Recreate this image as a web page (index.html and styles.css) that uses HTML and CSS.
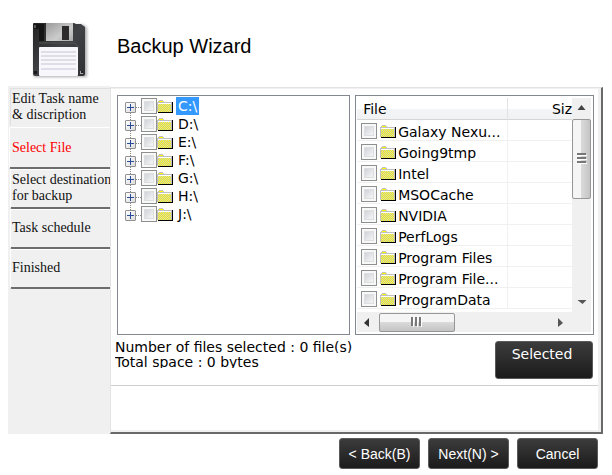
FILE: index.html
```html
<!DOCTYPE html>
<html lang="en">
<head>
<meta charset="utf-8">
<title>Backup Wizard</title>
<link rel="stylesheet" href="styles.css">
</head>
<body>
<svg class="defs" aria-hidden="true">
  <defs>
    <pattern id="dither" width="2" height="2" patternUnits="userSpaceOnUse">
      <rect width="2" height="2" fill="#ff0"/>
      <rect width="1" height="1" fill="#c8c8c8"/>
      <rect x="1" y="1" width="1" height="1" fill="#c8c8c8"/>
    </pattern>
    <symbol id="folder" viewBox="0 0 16 14">
      <path d="M15 3h1v11H1v-1h14z" fill="#000"/>
      <path d="M0 3h1V2h1V1h4v1h1v1h8v10H0z" fill="#c0c0c0"/>
      <path d="M2 2h4v1H2z" fill="#ff0"/>
      <path d="M1 4h13v1H1z" fill="#fff"/>
      <path d="M1 5h13v8H1z" fill="url(#dither)"/>
    </symbol>
  </defs>
</svg>

<header class="header">
  <svg class="floppy" viewBox="0 0 58 60" aria-hidden="true">
    <defs>
      <linearGradient id="body" x1="0" y1="0" x2="1" y2="1"><stop offset="0" stop-color="#222"/><stop offset=".5" stop-color="#414245"/><stop offset="1" stop-color="#303134"/></linearGradient>
      <linearGradient id="metal" x1="0" y1="0" x2="1" y2="1"><stop offset="0" stop-color="#999"/><stop offset=".6" stop-color="#ccc"/><stop offset="1" stop-color="#aaa"/></linearGradient>
      <filter id="soft" x="-20%" y="-20%" width="140%" height="140%"><feGaussianBlur stdDeviation="1.5"/></filter>
    </defs>
    <path d="M3 4h50l3 3v49H3z" fill="#777" opacity=".6" filter="url(#soft)"/>
    <path d="M3 2h40l2 1h5l4 3v47q0 2-2 2H4q-2 0-2-2V3q0-1 1-1z" fill="url(#body)"/>
    <path d="M3 3h10v17H8V8H3z" fill="#151515"/>
    <rect x="3" y="4" width="2" height="3" fill="#555"/>
    <path d="M15 2h27v18H15z" fill="url(#metal)"/>
    <rect x="31" y="5" width="7" height="14" fill="#2c2a2a"/>
    <path d="M8 22h36l4 5" fill="none" stroke="#555" stroke-width="1"/>
    <rect x="8" y="26" width="39" height="29" rx="1" fill="#f8f8fc"/>
    <path d="M10 31h35M10 35h35M10 39h35M10 43h35M10 48h35" stroke="#c6c4d3"/>
    <rect x="3" y="50" width="3" height="3" fill="#191919"/>
    <rect x="49" y="50" width="3" height="3" fill="#aaa"/>
    <rect x="50" y="50" width="2" height="2" fill="#222"/>
  </svg>
  <h1 class="title">Backup Wizard</h1>
</header>

<main class="wizard">
  <nav class="steps" aria-label="Steps">
    <a class="step first" href="#name">Edit Task name<br>&amp; discription</a>
    <a class="step current" href="#files" aria-current="step">Select File</a>
    <a class="step" href="#destination">Select destination<br>for backup</a>
    <a class="step" href="#schedule">Task schedule</a>
    <a class="step" href="#finished">Finished</a>
  </nav>

  <section class="panel">
    <div class="browsers">
      <ul class="tree box">
        <li class="node"><button class="expander" aria-label="Expand C"></button><input class="check" type="checkbox" id="c"><svg class="folder"><use href="#folder"/></svg><label class="drive chosen" for="c">C:\</label></li>
        <li class="node"><button class="expander" aria-label="Expand D"></button><input class="check" type="checkbox" id="d"><svg class="folder"><use href="#folder"/></svg><label class="drive" for="d">D:\</label></li>
        <li class="node"><button class="expander" aria-label="Expand E"></button><input class="check" type="checkbox" id="e"><svg class="folder"><use href="#folder"/></svg><label class="drive" for="e">E:\</label></li>
        <li class="node"><button class="expander" aria-label="Expand F"></button><input class="check" type="checkbox" id="f"><svg class="folder"><use href="#folder"/></svg><label class="drive" for="f">F:\</label></li>
        <li class="node"><button class="expander" aria-label="Expand G"></button><input class="check" type="checkbox" id="g"><svg class="folder"><use href="#folder"/></svg><label class="drive" for="g">G:\</label></li>
        <li class="node"><button class="expander" aria-label="Expand H"></button><input class="check" type="checkbox" id="h"><svg class="folder"><use href="#folder"/></svg><label class="drive" for="h">H:\</label></li>
        <li class="node"><button class="expander" aria-label="Expand J"></button><input class="check" type="checkbox" id="j"><svg class="folder"><use href="#folder"/></svg><label class="drive" for="j">J:\</label></li>
      </ul>

      <div class="list box">
        <div class="list-main">
          <table class="files">
            <thead><tr><th class="col-file">File</th><th class="col-size">Siz</th></tr></thead>
            <tbody>
              <tr><td><div class="entry"><input class="check" type="checkbox" id="f1"><svg class="folder"><use href="#folder"/></svg><label for="f1">Galaxy Nexu...</label></div></td><td></td></tr>
              <tr><td><div class="entry"><input class="check" type="checkbox" id="f2"><svg class="folder"><use href="#folder"/></svg><label for="f2">Going9tmp</label></div></td><td></td></tr>
              <tr><td><div class="entry"><input class="check" type="checkbox" id="f3"><svg class="folder"><use href="#folder"/></svg><label for="f3">Intel</label></div></td><td></td></tr>
              <tr><td><div class="entry"><input class="check" type="checkbox" id="f4"><svg class="folder"><use href="#folder"/></svg><label for="f4">MSOCache</label></div></td><td></td></tr>
              <tr><td><div class="entry"><input class="check" type="checkbox" id="f5"><svg class="folder"><use href="#folder"/></svg><label for="f5">NVIDIA</label></div></td><td></td></tr>
              <tr><td><div class="entry"><input class="check" type="checkbox" id="f6"><svg class="folder"><use href="#folder"/></svg><label for="f6">PerfLogs</label></div></td><td></td></tr>
              <tr><td><div class="entry"><input class="check" type="checkbox" id="f7"><svg class="folder"><use href="#folder"/></svg><label for="f7">Program Files</label></div></td><td></td></tr>
              <tr><td><div class="entry"><input class="check" type="checkbox" id="f8"><svg class="folder"><use href="#folder"/></svg><label for="f8">Program File...</label></div></td><td></td></tr>
              <tr><td><div class="entry"><input class="check" type="checkbox" id="f9"><svg class="folder"><use href="#folder"/></svg><label for="f9">ProgramData</label></div></td><td></td></tr>
            </tbody>
          </table>
          <div class="vbar">
            <svg class="arrow-v" viewBox="0 0 18 20"><path d="M5 12l4-5 4 5z" fill="#444"/></svg>
            <div class="thumb thumb-v"><svg width="10" height="12"><path d="M0 1h9M0 5h9M0 9h9" stroke="#777" stroke-width="2"/><path d="M0 2.5h10M0 6.500h10M0 10.500h10" stroke="#fff"/></svg></div>
            <svg class="arrow-v low" viewBox="0 0 18 20"><path d="M5 10h9l-4 4z" fill="#555"/></svg>
          </div>
        </div>
        <div class="hbar">
          <svg class="arrow-h" viewBox="0 0 22 19"><path d="M12 5v9L7 10z" fill="#333"/></svg>
          <div class="thumb thumb-h"><svg width="12" height="10"><path d="M1 0v9M5 0v9M9 0v9" stroke="#777" stroke-width="2"/><path d="M2.500 0v10M6.500 0v10M10.500 0v10" stroke="#fff"/></svg></div>
          <svg class="arrow-h far" viewBox="0 0 22 19"><path d="M9 5v9l5-4z" fill="#555"/></svg>
        </div>
      </div>
    </div>

    <div class="summary">
      <div class="stats">
        <p class="stat">Number of files selected : 0 file(s)</p>
        <p class="stat">Total space : 0 bytes</p>
      </div>
      <button class="btn selected">Selected</button>
    </div>
    <div class="message"></div>
  </section>
</main>

<footer class="actions">
  <button class="btn">&lt; Back(B)</button>
  <button class="btn">Next(N) &gt;</button>
  <button class="btn">Cancel</button>
</footer>
</body>
</html>
```
FILE: styles.css
```css
* { box-sizing: border-box; }

body {
  margin: 0;
  background: #fff;
  color: #000;
  font: 14px/16px "DejaVu Sans", sans-serif;
}

.defs { position: absolute; width: 0; height: 0; }

.header {
  display: flex;
  align-items: flex-end;
  gap: 28px;
  height: 86px;
  padding: 0 0 5px 31px;
}
.floppy { width: 58px; height: 60px; }
.title {
  margin: 0;
  padding-bottom: 23px;
  font: 20px/24px "Liberation Sans", Arial, sans-serif;
}

.wizard {
  display: flex;
  min-height: 348px;
  margin: 0 9px 0 8px;
}

.steps {
  display: flex;
  flex-direction: column;
  flex: 0 0 102px;
  min-width: 0;
  padding: 2px 0 0 2px;
  background: #f0f0f0;
}
.step {
  display: flex;
  align-items: center;
  height: 40px;
  padding: 0 0 2px 1px;
  border: 1px solid #fff;
  border-right: 0;
  border-bottom: 2px solid #6d6d6d;
  border-radius: 2px 0 0 2px;
  color: #111;
  font: 14px/16px "Liberation Serif", "Times New Roman", serif;
  text-decoration: none;
  white-space: nowrap;
}
.step.first { height: 39px; padding-bottom: 0; border-color: #e0e0e0 #f0f0f0 #f0f0f0 #e0e0e0; }
.step.current {
  height: 42px;
  margin-left: -1px;
  padding: 0 0 0 2px;
  color: #f00;
}

.panel {
  flex: 1;
  min-width: 0;
  display: flex;
  flex-direction: column;
  margin-top: 1px;
  border: 1px solid #e3e3e3;
  border-width: 1px 2px 2px 1px;
  border-right-color: #696969;
  border-bottom-color: #696969;
  box-shadow: inset 0 1px #f0f0f0, inset -3px -2px #f0f0f0;
}

.browsers {
  display: flex;
  gap: 5px;
  padding: 7px 7px 0 6px;
}
.box {
  height: 240px;
  margin: 0;
  border: 1px solid #828790;
  background: #fff;
}

.tree {
  flex: 231;
  padding: 1px 0 0 7px;
  list-style: none;
  font-size: 14px;
}
.node {
  display: flex;
  align-items: center;
  height: 18px;
  background:
    repeating-linear-gradient(90deg, #888 0 1px, transparent 1px 2px) 11px 10px / 5px 1px no-repeat,
    repeating-linear-gradient(#888 0 1px, transparent 1px 2px) 5px 0 / 1px 18px no-repeat;
}
.node:first-child {
  background:
    repeating-linear-gradient(90deg, #888 0 1px, transparent 1px 2px) 11px 10px / 5px 1px no-repeat,
    repeating-linear-gradient(#888 0 1px, transparent 1px 2px) 5px 10px / 1px 8px no-repeat;
}
.node:last-child {
  background:
    repeating-linear-gradient(90deg, #888 0 1px, transparent 1px 2px) 11px 10px / 5px 1px no-repeat,
    repeating-linear-gradient(#888 0 1px, transparent 1px 2px) 5px 0 / 1px 9px no-repeat;
}
.expander {
  flex: none;
  width: 11px;
  height: 11px;
  margin: 2px 5px 0 0;
  padding: 0;
  border: 1px solid #919191;
  border-radius: 1px;
  background:
    linear-gradient(#2a4a9a, #2a4a9a) center / 7px 1px no-repeat,
    linear-gradient(#2a4a9a, #2a4a9a) center / 1px 7px no-repeat,
    linear-gradient(135deg, #fff, #dcdcdc);
}
.check {
  appearance: none;
  flex: none;
  width: 16px;
  height: 16px;
  margin: 0;
  border: 1px solid #8e8f8f;
  outline: 1px solid #dcdee0;
  outline-offset: -4px;
  background: linear-gradient(135deg, #cfd3d9, #f6f6f6) center / 8px 8px no-repeat, #f8f8f8;
}
.folder { flex: none; width: 16px; height: 14px; }
.drive {
  margin-left: 3px;
  padding: 0 2px;
  line-height: 18px;
}
.chosen { background: #3399ff; color: #fff; }

.list {
  flex: 241;
  min-width: 0;
  display: flex;
  flex-direction: column;
  padding: 2px 2px 2px 1px;
}
.list-main { display: flex; flex: 1; min-height: 0; }
.files {
  flex: 1;
  min-width: 0;
  align-self: flex-start;
  border-collapse: separate;
  border-spacing: 0;
  table-layout: fixed;
}
.files th {
  height: 22px;
  padding: 0;
  border-right: 1px solid #e0e3e8;
  border-bottom: 1px solid #d5d5d5;
  background: linear-gradient(#fff 50%, #f4f5f7 50%, #f1f2f4);
  font-weight: 400;
}
.files .col-file { width: 151px; padding-left: 6px; text-align: left; }
.files .col-size { border-right: 0; text-align: right; }
.files td {
  height: 21px;
  padding: 0;
  border-bottom: 1px solid #f0f0f0;
}
.files td:first-child { border-right: 1px solid #f0f0f0; }
.entry {
  display: flex;
  align-items: flex-end;
  height: 20px;
  padding-left: 4px;
  white-space: nowrap;
}
.entry .check { margin-bottom: 1px; }
.entry .folder { margin: 0 2px 2px 3px; }

.vbar {
  display: flex;
  flex-direction: column;
  flex: 0 0 19px;
  padding-bottom: 2px;
  background: #f0f0f0;
}
.arrow-v { flex: none; width: 19px; height: 20px; }
.low { margin-top: auto; }
.thumb {
  display: flex;
  flex: none;
  align-items: center;
  justify-content: center;
  border: 1px solid #979797;
  border-radius: 2px;
}
.thumb-v { height: 80px; margin-top: 1px; background: linear-gradient(90deg, #f5f5f5 45%, #dadada 50%, #c4c4c4); }
.hbar {
  display: flex;
  align-items: center;
  flex: 0 0 20px;
  padding-right: 20px;
  background: #f0f0f0;
}
.arrow-h { flex: none; width: 22px; height: 19px; }
.far { margin-left: auto; }
.thumb-h { width: 76px; height: 19px; background: linear-gradient(#f5f5f5 45%, #dadada 50%, #c4c4c4); }

.summary {
  display: flex;
  align-items: flex-start;
  justify-content: space-between;
  height: 50px;
  padding: 3px 8px 0 4px;
}
.stat {
  height: 15px;
  margin: 0;
  line-height: 18px;
  overflow: hidden;
}
.message { flex: 1; margin-right: 3px; border-top: 1px solid #cfcfcf; }

.actions {
  display: flex;
  justify-content: flex-end;
  gap: 8px;
  padding: 4px 14px 0 0;
}
.btn {
  width: 81px;
  height: 31px;
  padding: 0;
  border: 1px solid #5a5a5a;
  border-radius: 3px;
  background: linear-gradient(#3c3c3c, #1b1b1b);
  color: #fff;
  font: 14px/16px "Liberation Sans", Arial, sans-serif;
}
.selected {
  width: 98px;
  height: 38px;
  margin-top: 3px;
  padding: 0 4px 12px 0;
  font: 14px/16px "DejaVu Sans", sans-serif;
}
```
